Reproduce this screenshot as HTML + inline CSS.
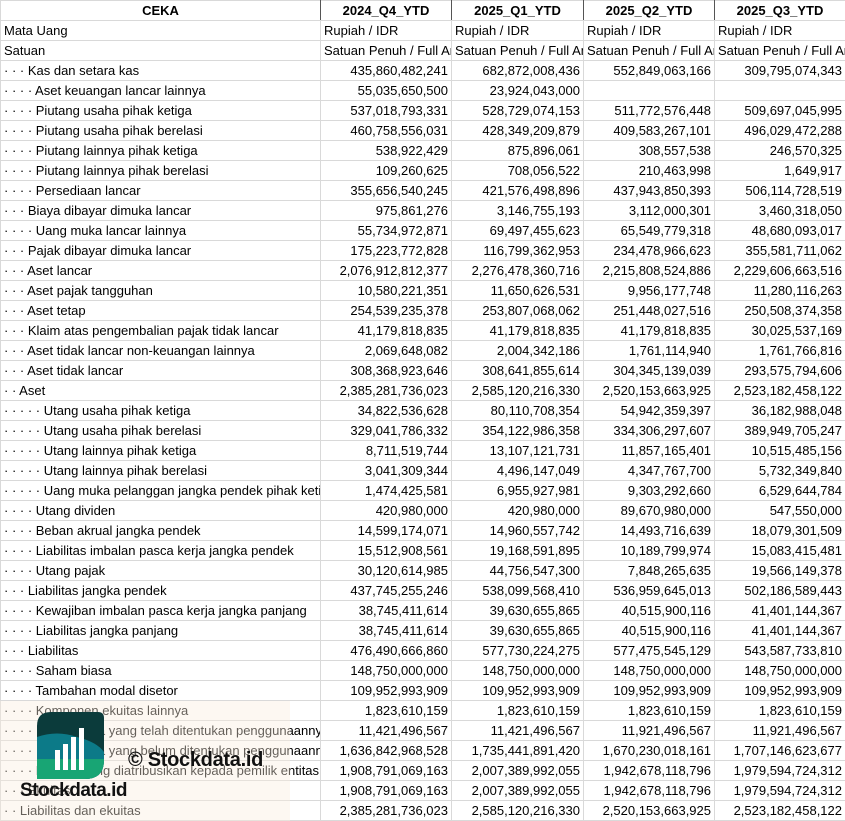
<!DOCTYPE html>
<html><head><meta charset="utf-8"><style>
body{margin:0;width:845px;height:821px;overflow:hidden;background:#fff;font-family:"Liberation Sans",sans-serif;font-size:13px;color:#000;position:relative}
table{border-collapse:collapse;table-layout:fixed;position:absolute;left:0;top:0;width:845px}
td{height:19px;padding:0 3px;border:1px solid #d9d9d9;white-space:nowrap;overflow:hidden;line-height:19px;text-overflow:clip}
td.n{text-align:right}
tr.h td{font-weight:bold;text-align:center;border-right:1px solid #555;border-bottom:1px solid #d9d9d9}
.ov{position:absolute;left:0;top:701px;width:290px;height:120px;background:rgba(250,238,222,.4)}
</style></head><body>
<table>
<colgroup><col style="width:320px"><col style="width:131px"><col style="width:132px"><col style="width:131px"><col style="width:131px"></colgroup>
<tr class="h"><td>CEKA</td><td>2024_Q4_YTD</td><td>2025_Q1_YTD</td><td>2025_Q2_YTD</td><td>2025_Q3_YTD</td></tr>
<tr><td>Mata Uang</td><td>Rupiah / IDR</td><td>Rupiah / IDR</td><td>Rupiah / IDR</td><td>Rupiah / IDR</td></tr>
<tr><td>Satuan</td><td>Satuan Penuh / Full Amount</td><td>Satuan Penuh / Full Amount</td><td>Satuan Penuh / Full Amount</td><td>Satuan Penuh / Full Amount</td></tr>
<tr><td>· · · Kas dan setara kas</td><td class="n">435,860,482,241</td><td class="n">682,872,008,436</td><td class="n">552,849,063,166</td><td class="n">309,795,074,343</td></tr>
<tr><td>· · · · Aset keuangan lancar lainnya</td><td class="n">55,035,650,500</td><td class="n">23,924,043,000</td><td class="n"></td><td class="n"></td></tr>
<tr><td>· · · · Piutang usaha pihak ketiga</td><td class="n">537,018,793,331</td><td class="n">528,729,074,153</td><td class="n">511,772,576,448</td><td class="n">509,697,045,995</td></tr>
<tr><td>· · · · Piutang usaha pihak berelasi</td><td class="n">460,758,556,031</td><td class="n">428,349,209,879</td><td class="n">409,583,267,101</td><td class="n">496,029,472,288</td></tr>
<tr><td>· · · · Piutang lainnya pihak ketiga</td><td class="n">538,922,429</td><td class="n">875,896,061</td><td class="n">308,557,538</td><td class="n">246,570,325</td></tr>
<tr><td>· · · · Piutang lainnya pihak berelasi</td><td class="n">109,260,625</td><td class="n">708,056,522</td><td class="n">210,463,998</td><td class="n">1,649,917</td></tr>
<tr><td>· · · · Persediaan lancar</td><td class="n">355,656,540,245</td><td class="n">421,576,498,896</td><td class="n">437,943,850,393</td><td class="n">506,114,728,519</td></tr>
<tr><td>· · · Biaya dibayar dimuka lancar</td><td class="n">975,861,276</td><td class="n">3,146,755,193</td><td class="n">3,112,000,301</td><td class="n">3,460,318,050</td></tr>
<tr><td>· · · · Uang muka lancar lainnya</td><td class="n">55,734,972,871</td><td class="n">69,497,455,623</td><td class="n">65,549,779,318</td><td class="n">48,680,093,017</td></tr>
<tr><td>· · · Pajak dibayar dimuka lancar</td><td class="n">175,223,772,828</td><td class="n">116,799,362,953</td><td class="n">234,478,966,623</td><td class="n">355,581,711,062</td></tr>
<tr><td>· · · Aset lancar</td><td class="n">2,076,912,812,377</td><td class="n">2,276,478,360,716</td><td class="n">2,215,808,524,886</td><td class="n">2,229,606,663,516</td></tr>
<tr><td>· · · Aset pajak tangguhan</td><td class="n">10,580,221,351</td><td class="n">11,650,626,531</td><td class="n">9,956,177,748</td><td class="n">11,280,116,263</td></tr>
<tr><td>· · · Aset tetap</td><td class="n">254,539,235,378</td><td class="n">253,807,068,062</td><td class="n">251,448,027,516</td><td class="n">250,508,374,358</td></tr>
<tr><td>· · · Klaim atas pengembalian pajak tidak lancar</td><td class="n">41,179,818,835</td><td class="n">41,179,818,835</td><td class="n">41,179,818,835</td><td class="n">30,025,537,169</td></tr>
<tr><td>· · · Aset tidak lancar non-keuangan lainnya</td><td class="n">2,069,648,082</td><td class="n">2,004,342,186</td><td class="n">1,761,114,940</td><td class="n">1,761,766,816</td></tr>
<tr><td>· · · Aset tidak lancar</td><td class="n">308,368,923,646</td><td class="n">308,641,855,614</td><td class="n">304,345,139,039</td><td class="n">293,575,794,606</td></tr>
<tr><td>· · Aset</td><td class="n">2,385,281,736,023</td><td class="n">2,585,120,216,330</td><td class="n">2,520,153,663,925</td><td class="n">2,523,182,458,122</td></tr>
<tr><td>· · · · · Utang usaha pihak ketiga</td><td class="n">34,822,536,628</td><td class="n">80,110,708,354</td><td class="n">54,942,359,397</td><td class="n">36,182,988,048</td></tr>
<tr><td>· · · · · Utang usaha pihak berelasi</td><td class="n">329,041,786,332</td><td class="n">354,122,986,358</td><td class="n">334,306,297,607</td><td class="n">389,949,705,247</td></tr>
<tr><td>· · · · · Utang lainnya pihak ketiga</td><td class="n">8,711,519,744</td><td class="n">13,107,121,731</td><td class="n">11,857,165,401</td><td class="n">10,515,485,156</td></tr>
<tr><td>· · · · · Utang lainnya pihak berelasi</td><td class="n">3,041,309,344</td><td class="n">4,496,147,049</td><td class="n">4,347,767,700</td><td class="n">5,732,349,840</td></tr>
<tr><td>· · · · · Uang muka pelanggan jangka pendek pihak ketiga</td><td class="n">1,474,425,581</td><td class="n">6,955,927,981</td><td class="n">9,303,292,660</td><td class="n">6,529,644,784</td></tr>
<tr><td>· · · · Utang dividen</td><td class="n">420,980,000</td><td class="n">420,980,000</td><td class="n">89,670,980,000</td><td class="n">547,550,000</td></tr>
<tr><td>· · · · Beban akrual jangka pendek</td><td class="n">14,599,174,071</td><td class="n">14,960,557,742</td><td class="n">14,493,716,639</td><td class="n">18,079,301,509</td></tr>
<tr><td>· · · · Liabilitas imbalan pasca kerja jangka pendek</td><td class="n">15,512,908,561</td><td class="n">19,168,591,895</td><td class="n">10,189,799,974</td><td class="n">15,083,415,481</td></tr>
<tr><td>· · · · Utang pajak</td><td class="n">30,120,614,985</td><td class="n">44,756,547,300</td><td class="n">7,848,265,635</td><td class="n">19,566,149,378</td></tr>
<tr><td>· · · Liabilitas jangka pendek</td><td class="n">437,745,255,246</td><td class="n">538,099,568,410</td><td class="n">536,959,645,013</td><td class="n">502,186,589,443</td></tr>
<tr><td>· · · · Kewajiban imbalan pasca kerja jangka panjang</td><td class="n">38,745,411,614</td><td class="n">39,630,655,865</td><td class="n">40,515,900,116</td><td class="n">41,401,144,367</td></tr>
<tr><td>· · · · Liabilitas jangka panjang</td><td class="n">38,745,411,614</td><td class="n">39,630,655,865</td><td class="n">40,515,900,116</td><td class="n">41,401,144,367</td></tr>
<tr><td>· · · Liabilitas</td><td class="n">476,490,666,860</td><td class="n">577,730,224,275</td><td class="n">577,475,545,129</td><td class="n">543,587,733,810</td></tr>
<tr><td>· · · · Saham biasa</td><td class="n">148,750,000,000</td><td class="n">148,750,000,000</td><td class="n">148,750,000,000</td><td class="n">148,750,000,000</td></tr>
<tr><td>· · · · Tambahan modal disetor</td><td class="n">109,952,993,909</td><td class="n">109,952,993,909</td><td class="n">109,952,993,909</td><td class="n">109,952,993,909</td></tr>
<tr><td>· · · · Komponen ekuitas lainnya</td><td class="n">1,823,610,159</td><td class="n">1,823,610,159</td><td class="n">1,823,610,159</td><td class="n">1,823,610,159</td></tr>
<tr><td>· · · · · Saldo laba yang telah ditentukan penggunaannya</td><td class="n">11,421,496,567</td><td class="n">11,421,496,567</td><td class="n">11,921,496,567</td><td class="n">11,921,496,567</td></tr>
<tr><td>· · · · · Saldo laba yang belum ditentukan penggunaannya</td><td class="n">1,636,842,968,528</td><td class="n">1,735,441,891,420</td><td class="n">1,670,230,018,161</td><td class="n">1,707,146,623,677</td></tr>
<tr><td>· · · · Ekuitas yang diatribusikan kepada pemilik entitas induk</td><td class="n">1,908,791,069,163</td><td class="n">2,007,389,992,055</td><td class="n">1,942,678,118,796</td><td class="n">1,979,594,724,312</td></tr>
<tr><td>· · · Ekuitas</td><td class="n">1,908,791,069,163</td><td class="n">2,007,389,992,055</td><td class="n">1,942,678,118,796</td><td class="n">1,979,594,724,312</td></tr>
<tr><td>· · Liabilitas dan ekuitas</td><td class="n">2,385,281,736,023</td><td class="n">2,585,120,216,330</td><td class="n">2,520,153,663,925</td><td class="n">2,523,182,458,122</td></tr>
</table>
<div class="ov"></div>
<svg style="position:absolute;left:37px;top:712px" width="67" height="67" viewBox="0 0 67 67">
<defs><clipPath id="c"><path d="M14 0 H61 Q67 0 67 6 V48 Q67 67 48 67 H0 V14 Q0 0 14 0 Z"/></clipPath></defs>
<g clip-path="url(#c)">
<rect width="67" height="67" fill="#0b3b3b"/>
<path d="M0 25 Q20 18 40 25 Q60 30 67 40 V67 H0 Z" fill="#0c7a88"/>
<path d="M0 47 H67 V67 H0 Z" fill="#18a574"/>
<rect x="18" y="38" width="5" height="20" fill="#fff"/>
<rect x="26" y="32" width="5" height="26" fill="#fff"/>
<rect x="34" y="25" width="5" height="33" fill="#fff"/>
<rect x="42" y="16" width="5" height="42" fill="#fff"/>
</g></svg>
<div style="position:absolute;left:20px;top:780px;font-weight:bold;font-size:19px;color:#111;letter-spacing:-0.5px">Stockdata.id</div>
<div style="position:absolute;left:128px;top:749px;font-weight:bold;font-size:20px;color:#111;letter-spacing:-0.3px">© Stockdata.id</div>
</body></html>
